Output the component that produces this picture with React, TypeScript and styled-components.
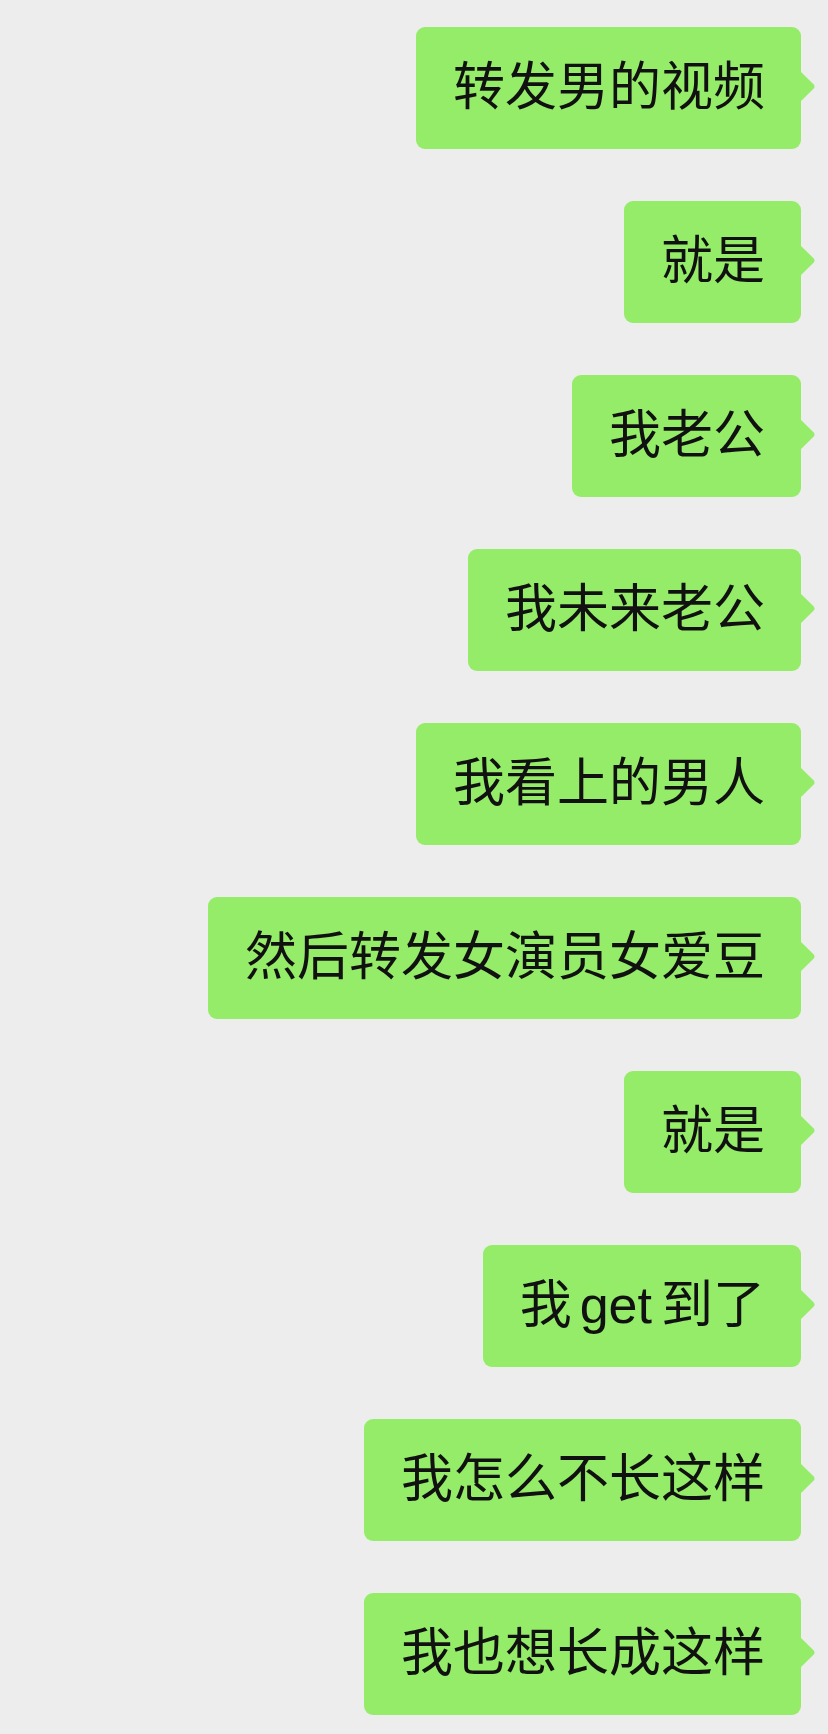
import React from "react";
import styled, { createGlobalStyle } from "styled-components";

const GlobalStyle = createGlobalStyle`
  html, body {
    margin: 0;
    padding: 0;
    background: #ededed;
  }
  body {
    font-family: "Liberation Sans", "Noto Sans CJK SC", sans-serif;
  }
`;

const Chat = styled.div`
  display: flex;
  flex-direction: column;
  align-items: flex-end;
  gap: 52px;
  padding: 27px 27px 19px 0;
  min-height: 1734px;
  box-sizing: border-box;
  background: #ededed;
`;

const Bubble = styled.div`
  position: relative;
  box-sizing: border-box;
  height: 122px;
  padding: 0 36px 0 37px;
  display: flex;
  align-items: center;
  background: #95ec69;
  border-radius: 9px;
  color: #111;
  font-family: "Liberation Sans", "Noto Sans CJK SC", sans-serif;
  font-size: 52px;
  line-height: 72px;
  white-space: nowrap;
`;

const Tail = styled.svg`
  position: absolute;
  right: -15px;
  top: 44px;
  width: 16px;
  height: 31px;
  overflow: visible;
`;

const Text = styled.span`
  display: block;
  transform: translateY(-1px);
`;

const Latin = styled.span`
  margin: 0 9px 0 8px;
`;

type Part = string | { latin: string };

const messages: Part[][] = [
  ["转发男的视频"],
  ["就是"],
  ["我老公"],
  ["我未来老公"],
  ["我看上的男人"],
  ["然后转发女演员女爱豆"],
  ["就是"],
  ["我", { latin: "get" }, "到了"],
  ["我怎么不长这样"],
  ["我也想长成这样"],
];

function Message({ parts }: { parts: Part[] }) {
  return (
    <Bubble>
      <Text>
        {parts.map((p, i) =>
          typeof p === "string" ? (
            <React.Fragment key={i}>{p}</React.Fragment>
          ) : (
            <Latin key={i}>{p.latin}</Latin>
          )
        )}
      </Text>
      <Tail viewBox="0 0 16 31">
        <path d="M-1 0 L0 0 L13.5 13.2 Q15.6 15.5 13.5 17.8 L0 31 L-1 31 Z" fill="#95ec69" />
      </Tail>
    </Bubble>
  );
}

export default function App() {
  return (
    <>
      <GlobalStyle />
      <Chat>
        {messages.map((m, i) => (
          <Message key={i} parts={m} />
        ))}
      </Chat>
    </>
  );
}
